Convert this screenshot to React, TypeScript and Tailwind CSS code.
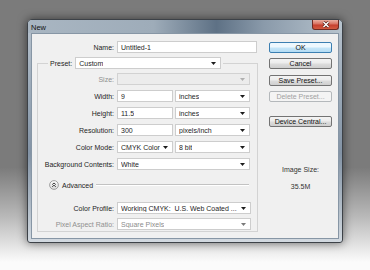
import { FunctionComponent, ReactNode } from "react";

const Arrow: FunctionComponent<{ color?: string }> = ({ color = "#1c1c1c" }) => (
  <svg width="5" height="3" viewBox="0 0 5 3" className="shrink-0">
    <path d="M0 0h5L2.5 3z" fill={color} />
  </svg>
);

type BoxProps = {
  value: string;
  w: string;
  dropdown?: boolean;
  muted?: boolean;
  disabled?: boolean;
};

const Box: FunctionComponent<BoxProps> = ({ value, w, dropdown, muted, disabled }) => (
  <div
    className={`${w} h-[12px] shrink-0 flex items-center justify-between pl-[3px] pr-[4px] border ${
      disabled ? "bg-[#ececec] border-[#d2d2d2]" : "bg-white border-[#cdcdcd]"
    }`}
  >
    <span className={`whitespace-pre overflow-hidden ${muted ? "text-[#8c8c8c]" : "text-[#1e1e1e]"}`}>{value}</span>
    {dropdown && <Arrow color={disabled ? "#b0b0b0" : muted ? "#7a7a7a" : "#1c1c1c"} />}
  </div>
);

const Row: FunctionComponent<{ label: string; muted?: boolean; children: ReactNode }> = ({
  label,
  muted,
  children,
}) => (
  <div className="flex items-center h-[12px]">
    <span className={`w-[79px] shrink-0 text-right pr-[3px] ${muted ? "text-[#8f8f8f]" : "text-[#1e1e1e]"}`}>
      {label}
    </span>
    <div className="flex gap-[2px]">{children}</div>
  </div>
);

const Button: FunctionComponent<{ label: string; kind?: "default" | "primary" | "disabled"; className?: string }> = ({
  label,
  kind = "default",
  className = "",
}) => {
  const look =
    kind === "primary"
      ? "border-[#3c7fb1] bg-[linear-gradient(#eef8fe,#eef8fe_45%,#c6e6f8_55%,#b3dcf4)] text-[#111]"
      : kind === "disabled"
      ? "border-[#b4b8bb] bg-[#f4f4f4] text-[#a2a2a2]"
      : "border-[#737373] bg-[linear-gradient(#f4f4f4,#ececec_45%,#dcdcdc_55%,#cfcfcf)] text-[#111]";
  return (
    <div className={`h-[11px] rounded-[2px] border flex items-center justify-center ${look} ${className}`}>
      {label}
    </div>
  );
};

const NewDocumentDialog: FunctionComponent = () => {
  return (
    <div className="w-[370px] h-[270px] overflow-hidden pt-[19px] pl-[27px] bg-[linear-gradient(#7b7b7b,#7b7b7b_62%,#b8b8b8_80%,#fbfbfb_97%)] font-['Liberation_Sans',Arial,sans-serif] text-[7px] leading-none">
      <div className="w-[316px] h-[224px] flex flex-col rounded-t-[5px] rounded-b-[3px] border border-[#3d4248] shadow-[0_0_10px_rgba(0,0,0,0.55)] bg-[linear-gradient(#b8c3ce,#98a7b6_35%,#8393a5_60%,#b3bec9_85%,#d2d9e0)]">
        {/* title bar */}
        <div className="h-[13px] flex justify-between rounded-t-[4px] bg-[linear-gradient(90deg,#a9b6c2,#9eacb9_40%,#5e7185_60%,#8a9aaa_75%,#b7c3cd)]">
          <span className="pl-[3px] pt-[4px] text-[7.5px] text-[#111]">New</span>
          <div className="w-[27px] h-[10px] mr-[3px] rounded-b-[3px] border border-t-0 border-[#6e2a22] bg-[linear-gradient(#eab0a2,#d9705f_45%,#c6402f_55%,#d35a3f)] flex items-center justify-center">
            <svg width="8" height="7" viewBox="0 0 8 7">
              <path d="M1.5 1l5 5M6.5 1l-5 5" stroke="#5b1d14" strokeWidth="3" />
              <path d="M1.5 1l5 5M6.5 1l-5 5" stroke="#ffffff" strokeWidth="1.5" />
            </svg>
          </div>
        </div>
        {/* client area */}
        <div className="mx-[3px] mb-[3px] flex-1 border border-[#8796a5] bg-[#f0f0f0] flex gap-[11px] pl-[5px] pr-[6px] pt-[7px]">
          <div className="w-[221px] flex flex-col">
            <div className="flex items-center h-[12px] pl-[1px]">
              <span className="w-[79px] text-right pr-[3px] text-[#1e1e1e]">Name:</span>
              <Box value="Untitled-1" w="w-[140px]" />
            </div>
            <fieldset className="mt-[4px] border border-[#d3d3d3] px-0 pt-[4px] pb-[1px] flex flex-col">
              <legend className="ml-[10px] px-[2px] flex items-center gap-[3px]">
                <span className="text-[#1e1e1e]">Preset:</span>
                <Box value="Custom" w="w-[146px]" dropdown />
              </legend>
              <div className="flex flex-col gap-[5px]">
                <Row label="Size:" muted>
                  <Box value="" w="w-[133px]" dropdown disabled />
                </Row>
                <Row label="Width:">
                  <Box value="9" w="w-[56px]" />
                  <Box value="inches" w="w-[75px]" dropdown />
                </Row>
                <Row label="Height:">
                  <Box value="11.5" w="w-[56px]" />
                  <Box value="inches" w="w-[75px]" dropdown />
                </Row>
                <Row label="Resolution:">
                  <Box value="300" w="w-[56px]" />
                  <Box value="pixels/inch" w="w-[75px]" dropdown />
                </Row>
                <Row label="Color Mode:">
                  <Box value="CMYK Color" w="w-[56px]" dropdown />
                  <Box value="8 bit" w="w-[75px]" dropdown />
                </Row>
                <Row label="Background Contents:">
                  <Box value="White" w="w-[133px]" dropdown />
                </Row>
              </div>
              <div className="mt-[10px] h-[10px] flex items-center pl-[11px] pr-[8px] gap-[3px]">
                <svg width="10" height="10" viewBox="0 0 10 10" className="shrink-0">
                  <defs>
                    <linearGradient id="adv" x1="0" y1="0" x2="0" y2="1">
                      <stop offset="0" stopColor="#ffffff" />
                      <stop offset="1" stopColor="#d9d9d9" />
                    </linearGradient>
                  </defs>
                  <circle cx="5" cy="5" r="4.4" fill="url(#adv)" stroke="#8e8e8e" strokeWidth="0.8" />
                  <path d="M3.2 4.6L5 3l1.8 1.6M3.2 6.8L5 5.2l1.8 1.6" fill="none" stroke="#2a2a2a" strokeWidth="0.9" />
                </svg>
                <span className="text-[#1e1e1e]">Advanced</span>
                <div className="flex-1 h-[2px] bg-[#c2c2c2] border-b border-white" />
              </div>
              <div className="mt-[12px] flex flex-col gap-[4px]">
                <Row label="Color Profile:">
                  <Box value="Working CMYK:  U.S. Web Coated ..." w="w-[134px]" dropdown />
                </Row>
                <Row label="Pixel Aspect Ratio:" muted>
                  <Box value="Square Pixels" w="w-[134px]" dropdown muted />
                </Row>
              </div>
            </fieldset>
          </div>
          <div className="w-[63px] flex flex-col">
            <Button label="OK" kind="primary" className="mt-[1px]" />
            <Button label="Cancel" className="mt-[5px]" />
            <Button label="Save Preset..." className="mt-[6px]" />
            <Button label="Delete Preset..." kind="disabled" className="mt-[5px]" />
            <Button label="Device Central..." className="mt-[14px]" />
            <div className="mt-[39px] text-center text-[#333]">Image Size:</div>
            <div className="mt-[10px] text-center text-[#333]">35.5M</div>
          </div>
        </div>
      </div>
    </div>
  );
};

export default NewDocumentDialog;
